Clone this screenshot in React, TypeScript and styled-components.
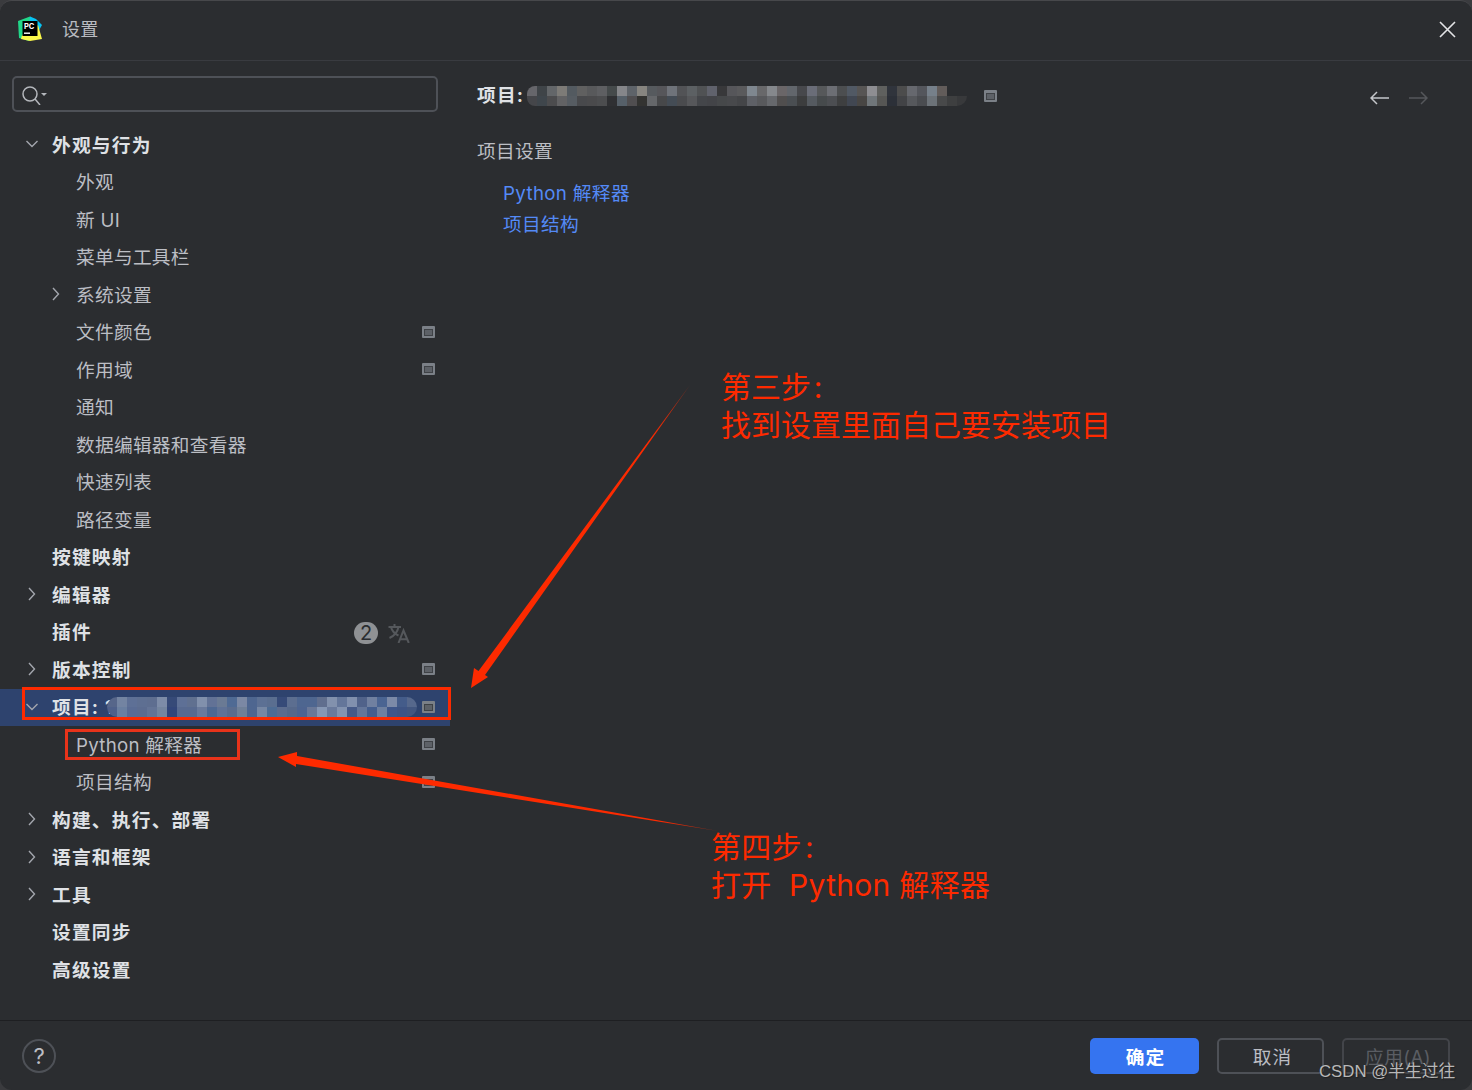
import styled, { createGlobalStyle } from 'styled-components';

const GlobalStyle = createGlobalStyle`
  html, body {
    margin: 0;
    padding: 0;
    background: #3a3b3e;
  }
`;

const CJK = `Inter, 'Noto Sans CJK SC', sans-serif`;
const RED = '#fd2a00';

const headerTop = ['#66666b', '#3f4448', '#636669', '#7d7b77', '#535a60', '#606060', '#58595b', '#5e5f62', '#454a4b', '#85868a', '#5e6369', '#878580', '#565a5e', '#56565a', '#6f737a', '#525356', '#5c6063', '#505254', '#60626c', '#38383a', '#56565a', '#5a5a5c', '#7f878f', '#68686a', '#85888c', '#6a6668', '#62666c', '#47484c', '#6a6d78', '#56585a', '#6c6e74', '#4c4e50', '#515964', '#575554', '#8e8e92', '#5f605e', '#30343c', '#4c4c4c', '#66686e', '#54565c', '#76808a', '#625c5a'];
const headerBottom = ['#45464a', '#3f464c', '#4c4c4e', '#626264', '#565c62', '#48494c', '#4a4a4c', '#4c4d4f', '#2f3033', '#566069', '#504e50', '#333331', '#65676a', '#47484a', '#444c55', '#4a4b4e', '#56575a', '#44464a', '#434448', '#46484a', '#48494c', '#444548', '#5e6066', '#58595c', '#66686c', '#504e4e', '#4a4e52', '#3c3d3e', '#555a60', '#464a4c', '#4c4e52', '#3e3f40', '#414752', '#484644', '#70767a', '#565654', '#2c3038', '#424346', '#56585c', '#4a4c50', '#6c7278', '#48494a', '#3e3f40', '#38393b'];
const rowTop = ['#56668a', '#7384a2', '#5e7096', '#5e6f92', '#5e6e90', '#7d8ca8', '#364a78', '#5e7096', '#607090', '#8190ac', '#627296', '#6a7a94', '#4f6a94', '#7b88a4', '#4e6690', '#5c7094', '#5a6e90', '#364a78', '#5c6e90', '#4e6690', '#4e6690', '#606e8e', '#8291ad', '#64769a', '#8190ae', '#50628a', '#7080a0', '#4a6492', '#7c8aa8', '#445c8a', '#56688c'];
const rowBottom = ['#4e608a', '#6a7fa0', '#5a6c94', '#5c6c90', '#647496', '#74859f', '#32467a', '#586a90', '#586a90', '#6a7a9c', '#4e6892', '#607296', '#5a6c8e', '#708098', '#4e6690', '#7687a4', '#4e6c94', '#5c6c8e', '#56688a', '#4e6490', '#6a7898', '#8697b4', '#6a7a9c', '#8393b0', '#465a88', '#64769a', '#445e8e', '#6e80a0', '#3e568a', '#3e5484', '#42567f'];

interface ITreeRow {
  label: string;
  level: 0 | 1;
  expand?: 'open' | 'closed';
  scoped?: boolean;
  selected?: boolean;
  plugins?: boolean;
}

const treeRows: ITreeRow[] = [
  { label: '外观与行为', level: 0, expand: 'open' },
  { label: '外观', level: 1 },
  { label: '新 UI', level: 1 },
  { label: '菜单与工具栏', level: 1 },
  { label: '系统设置', level: 1, expand: 'closed' },
  { label: '文件颜色', level: 1, scoped: true },
  { label: '作用域', level: 1, scoped: true },
  { label: '通知', level: 1 },
  { label: '数据编辑器和查看器', level: 1 },
  { label: '快速列表', level: 1 },
  { label: '路径变量', level: 1 },
  { label: '按键映射', level: 0 },
  { label: '编辑器', level: 0, expand: 'closed' },
  { label: '插件', level: 0, plugins: true },
  { label: '版本控制', level: 0, expand: 'closed', scoped: true },
  { label: '项目: 1', level: 0, expand: 'open', scoped: true, selected: true },
  { label: 'Python 解释器', level: 1, scoped: true },
  { label: '项目结构', level: 1, scoped: true },
  { label: '构建、执行、部署', level: 0, expand: 'closed' },
  { label: '语言和框架', level: 0, expand: 'closed' },
  { label: '工具', level: 0, expand: 'closed' },
  { label: '设置同步', level: 0 },
  { label: '高级设置', level: 0 },
];

function Mosaic({ top, bottom }: { top: string[]; bottom: string[] }) {
  const width = Math.max(top.length, bottom.length) * 10;
  return (
    <svg width={width} height={20} viewBox={`0 0 ${width} 20`} shapeRendering='crispEdges'>
      {top.map((c, i) => <rect key={i} x={i * 10} y={0} width={10} height={10} fill={c} />)}
      {bottom.map((c, i) => <rect key={i} x={i * 10} y={10} width={10} height={10} fill={c} />)}
    </svg>
  );
}

function ScopeIcon() {
  return (
    <svg width={13} height={12} viewBox='0 0 13 12'>
      <rect x={0} y={0} width={13} height={12} rx={1} fill='#7b8087' />
      <rect x={2} y={3} width={9} height={7} fill='#3f4246' />
      <rect x={3} y={4} width={7} height={5} fill='#5d6167' />
    </svg>
  );
}

function Chevron({ open }: { open: boolean }) {
  return (
    <svg width={16} height={16} viewBox='0 0 16 16' fill='none' stroke='#a3a6ad' strokeWidth={1.4}>
      <path d={open ? 'M2.5 5 L8 10.5 L13.5 5' : 'M5 2 L10.5 8 L5 14'} />
    </svg>
  );
}

function TranslateIcon() {
  return (
    <svg width={22} height={20} viewBox='0 0 22 20' fill='none' stroke='#55585c' strokeWidth={2}>
      <path d='M0.5 4 H13 M6.5 1 V4 M10.5 4 C9.5 9 6 13 1.5 15 M3 4 C4 8 7 11 10.5 12.5' />
      <path d='M10.5 20 L15.5 7.5 L20.8 20 M12 16.2 H19.4' />
    </svg>
  );
}

function PyCharmLogo() {
  return (
    <svg width={26} height={26} viewBox='0 0 26 26'>
      <path d='M1 5 L13 0.5 L17 4 L12 25 L2 22 Z' fill='#21d789' />
      <path d='M13 0.5 L19 3 L25 9 L20 18 L12 12 Z' fill='#07c3f2' />
      <path d='M5 19 L21 9 L25 23 L13 25 L4 23 Z' fill='#fcf84a' />
      <rect x={5.5} y={5} width={15} height={15} fill='#000' />
      <text x={7} y={12.5} fill='#fff' fontFamily='Inter, sans-serif' fontWeight={700} fontSize={7.5}>PC</text>
      <rect x={7} y={16.5} width={6} height={1.4} fill='#fff' />
    </svg>
  );
}

function TreeEntry({ row }: { row: ITreeRow }) {
  return (
    <Row $level={row.level} $selected={row.selected}>
      <ChevronSlot>{row.expand && <Chevron open={row.expand === 'open'} />}</ChevronSlot>
      <RowLabel $level={row.level}>{row.label}</RowLabel>
      {row.selected && (
        <RowMosaic>
          <Mosaic top={rowTop} bottom={rowBottom} />
        </RowMosaic>
      )}
      {row.plugins && (
        <PluginMeta>
          <Badge>2</Badge>
          <TranslateIcon />
        </PluginMeta>
      )}
      {row.scoped && (
        <RowIcon>
          <ScopeIcon />
        </RowIcon>
      )}
    </Row>
  );
}

export default function App() {
  return (
    <>
      <GlobalStyle />
      <Window>
        <TitleBar>
          <LogoSlot>
            <PyCharmLogo />
          </LogoSlot>
          <Title>设置</Title>
          <CloseButton>
            <svg width={17} height={17} viewBox='0 0 17 17' stroke='#e3e4e6' strokeWidth={1.6}>
              <path d='M1 1 L16 16 M16 1 L1 16' />
            </svg>
          </CloseButton>
        </TitleBar>
        <Body>
          <Sidebar>
            <SearchBox>
              <svg width={26} height={22} viewBox='0 -2 26 22' fill='none' stroke='#b4b7bc' strokeWidth={1.5}>
                <circle cx={9} cy={9} r={7} />
                <path d='M14 14 L19 20' />
                <path d='M20 8 H26 L23 11 Z' fill='#b4b7bc' stroke='none' />
              </svg>
            </SearchBox>
            <Tree>
              {treeRows.map(row => (
                <TreeEntry key={row.label} row={row} />
              ))}
            </Tree>
          </Sidebar>
          <Content>
            <ContentHeader>
              <Crumb>项目:</Crumb>
              <HeaderMosaic>
                <Mosaic top={headerTop} bottom={headerBottom} />
              </HeaderMosaic>
              <ScopeIcon />
              <NavArrows>
                <svg width={19} height={14} viewBox='0 0 19 14' fill='none' stroke='#c4c6ca' strokeWidth={1.5}>
                  <path d='M19 7 H1 M7 1 L1 7 L7 13' />
                </svg>
                <svg width={19} height={14} viewBox='0 0 19 14' fill='none' stroke='#55575b' strokeWidth={1.5}>
                  <path d='M0 7 H18 M12 1 L18 7 L12 13' />
                </svg>
              </NavArrows>
            </ContentHeader>
            <SectionTitle>项目设置</SectionTitle>
            <LinkList>
              <SettingLink>Python 解释器</SettingLink>
              <SettingLink>项目结构</SettingLink>
            </LinkList>
          </Content>
        </Body>
        <Footer>
          <HelpButton>?</HelpButton>
          <FooterActions>
            <FooterButton $variant='primary'>确定</FooterButton>
            <FooterButton>取消</FooterButton>
            <FooterButton $variant='disabled'>应用(A)</FooterButton>
          </FooterActions>
        </Footer>
        <Watermark>CSDN @半生过往</Watermark>

        <RowHighlight />
        <PythonHighlight />
        <ArrowLayer width={1472} height={1090} viewBox='0 0 1472 1090'>
          <defs>
            <linearGradient id='fadeA' gradientUnits='userSpaceOnUse' x1='690' y1='385' x2='650' y2='441'>
              <stop offset='0' stopColor={RED} stopOpacity={0.5} />
              <stop offset='1' stopColor={RED} />
            </linearGradient>
            <linearGradient id='fadeB' gradientUnits='userSpaceOnUse' x1='718' y1='831' x2='660' y2='820'>
              <stop offset='0' stopColor={RED} stopOpacity={0.5} />
              <stop offset='1' stopColor={RED} />
            </linearGradient>
          </defs>
          <polygon points='690,385 485,675 488,677 471,688 474,668 478.5,671' fill='url(#fadeA)' />
          <polygon points='718,831 296,764 296,767 278,757 297,752 297,756' fill='url(#fadeB)' />
        </ArrowLayer>
        <NoteThree>
          第三步&#8202;:
          <br />
          找到设置里面自己要安装项目
        </NoteThree>
        <NoteFour>
          第四步&#8202;:
          <br />
          打开&nbsp;&nbsp;Python 解释器
        </NoteFour>
      </Window>
    </>
  );
}

const Window = styled.div`
  position: relative;
  width: 1472px;
  height: 1090px;
  display: flex;
  flex-direction: column;
  box-sizing: border-box;
  overflow: hidden;
  background: #2b2d30;
  border-top: 1px solid #47484b;
  border-radius: 12px;
  color: #bcbec4;
  font-family: ${CJK};
`;

const TitleBar = styled.header`
  height: 56px;
  padding-bottom: 3px;
  flex: none;
  display: flex;
  align-items: center;
  border-bottom: 1px solid #393b40;
`;

const LogoSlot = styled.div`
  display: flex;
  margin-left: 17px;
  width: 45px;
`;

const Title = styled.span`
  font-size: 18px;
  letter-spacing: 0.2px;
  color: #b9bbc0;
  margin-bottom: 3px;
`;

const CloseButton = styled.div`
  display: flex;
  margin-left: auto;
  margin-right: 16px;
  margin-top: 1px;
`;

const Body = styled.div`
  flex: 1;
  min-height: 0;
  display: flex;
`;

const Sidebar = styled.aside`
  width: 450px;
  flex: none;
  padding-top: 15px;
  box-sizing: border-box;
`;

const SearchBox = styled.div`
  display: flex;
  align-items: center;
  box-sizing: border-box;
  width: 426px;
  height: 36px;
  margin-left: 12px;
  padding-left: 7px;
  border: 2px solid #4e5157;
  border-radius: 5px;
`;

const Tree = styled.nav`
  margin-top: 14.25px;
`;

const Row = styled.div<{ $level: number; $selected?: boolean }>`
  position: relative;
  height: 37.5px;
  display: flex;
  align-items: center;
  box-sizing: border-box;
  padding-left: ${p => (p.$level === 0 ? 20 : 44)}px;
  padding-right: 15px;
  background: ${p => (p.$selected ? '#2e436e' : 'transparent')};
`;

const ChevronSlot = styled.span`
  width: 24px;
  margin-right: 8px;
  flex: none;
  display: flex;
  justify-content: center;
  margin-top: -2px;
`;

const RowLabel = styled.span<{ $level: number }>`
  font-size: 18.7px;
  line-height: 24px;
  margin-top: 1px;
  font-weight: ${p => (p.$level === 0 ? 700 : 400)};
  letter-spacing: ${p => (p.$level === 0 ? 1.25 : 0.28)}px;
  color: ${p => (p.$level === 0 ? '#dfe1e5' : '#bcbec4')};
  white-space: nowrap;
`;

const RowMosaic = styled.div`
  position: absolute;
  left: 107px;
  top: 8px;
  display: flex;
  border-radius: 10px;
  overflow: hidden;
`;

const RowIcon = styled.span`
  display: flex;
  margin-left: auto;
  margin-top: -2px;
`;

const PluginMeta = styled.div`
  display: flex;
  align-items: center;
  gap: 10px;
  margin-left: auto;
  margin-right: 25px;
`;

const Badge = styled.span`
  width: 24px;
  height: 22px;
  border-radius: 11px;
  background: #8f9194;
  color: #2b2d30;
  font-size: 20px;
  line-height: 22px;
  text-align: center;
`;

const Content = styled.main`
  flex: 1;
  padding: 0 44px 0 27px;
`;

const ContentHeader = styled.div`
  display: flex;
  align-items: center;
  height: 70px;
`;

const Crumb = styled.span`
  font-size: 18.7px;
  font-weight: 700;
  letter-spacing: 1.25px;
  color: #dfe1e5;
  margin-bottom: 6px;
`;

const HeaderMosaic = styled.div`
  display: flex;
  margin-left: 3px;
  margin-right: 17px;
  border-radius: 8px 10px 10px 8px;
  overflow: hidden;
`;

const NavArrows = styled.div`
  display: flex;
  gap: 20px;
  margin-left: auto;
  margin-top: 4px;
`;

const SectionTitle = styled.h2`
  margin: 8px 0 0;
  font-size: 18.7px;
  line-height: 26px;
  font-weight: 400;
  letter-spacing: 0.28px;
  color: #bcbec4;
`;

const LinkList = styled.div`
  display: flex;
  flex-direction: column;
  gap: 5px;
  margin: 16px 0 0 26px;
`;

const SettingLink = styled.a`
  font-size: 18.7px;
  line-height: 26px;
  letter-spacing: 0.35px;
  color: #548af7;
`;

const Footer = styled.footer`
  height: 70px;
  flex: none;
  box-sizing: border-box;
  display: flex;
  align-items: center;
  padding: 0 22px;
  border-top: 1px solid #1e1f22;
`;

const HelpButton = styled.div`
  width: 34px;
  height: 34px;
  box-sizing: border-box;
  border: 2px solid #4e5157;
  border-radius: 50%;
  text-align: center;
  font-size: 22px;
  line-height: 30px;
  color: #bcbec4;
`;

const FooterActions = styled.div`
  display: flex;
  gap: 18px;
  margin-left: auto;
`;

const FooterButton = styled.button<{ $variant?: 'primary' | 'disabled' }>`
  width: ${p => (p.$variant === 'primary' ? 109 : p.$variant === 'disabled' ? 108 : 107)}px;
  height: 36px;
  padding: 0 0 0 ${p => (p.$variant === 'primary' ? 2 : 4)}px;
  box-sizing: border-box;
  border-radius: 5px;
  font-family: ${CJK};
  font-size: 18.7px;
  letter-spacing: ${p => (p.$variant === 'disabled' ? 0.4 : 1)}px;
  font-weight: ${p => (p.$variant === 'primary' ? 700 : 400)};
  background: ${p => (p.$variant === 'primary' ? '#3574f0' : 'transparent')};
  color: ${p => (p.$variant === 'primary' ? '#ffffff' : p.$variant === 'disabled' ? '#5a5d63' : '#bcbec4')};
  border: ${p => (p.$variant === 'primary' ? 'none' : `2px solid ${p.$variant === 'disabled' ? '#43454a' : '#4e5157'}`)};
`;

const Watermark = styled.span`
  position: absolute;
  left: 1319px;
  top: 1059px;
  font-family: 'Liberation Sans', 'Noto Sans CJK SC', sans-serif;
  font-size: 16.8px;
  line-height: 24px;
  color: #b8b8b8;
  text-shadow: 1px 1px 1px #202020;
  white-space: nowrap;
`;

const RowHighlight = styled.div`
  position: absolute;
  left: 22px;
  top: 686px;
  width: 429px;
  height: 33px;
  box-sizing: border-box;
  border: 3px solid ${RED};
`;

const PythonHighlight = styled.div`
  position: absolute;
  left: 65px;
  top: 728px;
  width: 175px;
  height: 31px;
  box-sizing: border-box;
  border: 3px solid #e8331a;
`;

const ArrowLayer = styled.svg`
  position: absolute;
  left: 0;
  top: -1px;
  pointer-events: none;
`;

const Note = styled.div`
  position: absolute;
  font-family: ${CJK};
  font-size: 30px;
  line-height: 38px;
  color: ${RED};
  white-space: nowrap;
`;

const NoteThree = styled(Note)`
  left: 721px;
  top: 367px;
`;

const NoteFour = styled(Note)`
  left: 711px;
  top: 827px;
  letter-spacing: 0.3px;
`;
